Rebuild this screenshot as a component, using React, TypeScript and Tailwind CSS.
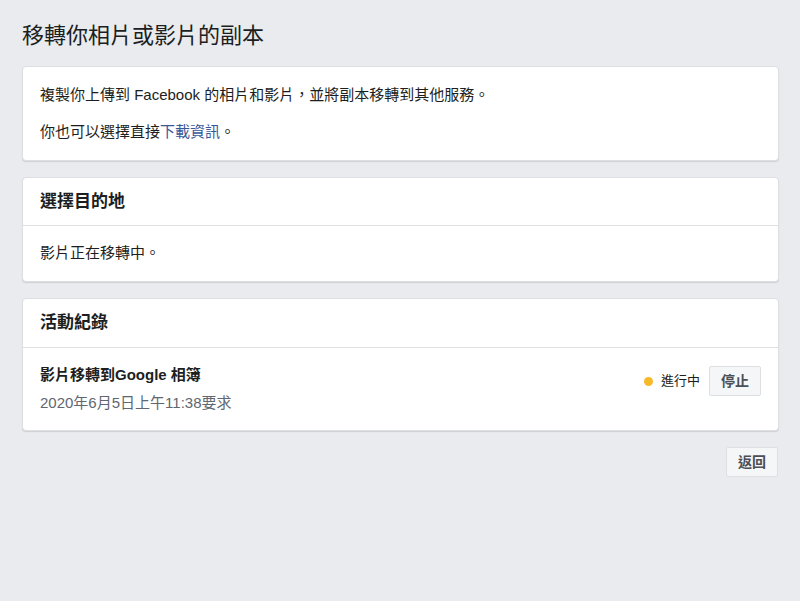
import React from "react";

const font = { fontFamily: '"Liberation Sans", "Noto Sans CJK TC", sans-serif' };

function Card({ children }: { children: React.ReactNode }) {
  return (
    <div className="bg-white rounded-[4px] border border-[#dddfe2] shadow-[0_1px_1px_rgba(0,0,0,0.12)]">
      {children}
    </div>
  );
}

export default function App() {
  return (
    <div className="min-h-[601px] w-full bg-[#e9ebee] text-[#1c1e21]" style={font}>
      <div className="pl-[22px] pr-[21px] pt-[22px]">
        <h1 className="text-[22px] leading-[28px] font-normal">移轉你相片或影片的副本</h1>

        <div className="mt-[16px] flex flex-col gap-[16px]">
          <Card>
            <div className="px-[17px] pt-[19px] pb-[19px] text-[15px] leading-[18px]">
              <p>複製你上傳到 Facebook 的相片和影片，並將副本移轉到其他服務。</p>
              <p className="mt-[19px]">
                你也可以選擇直接<span className="text-[#385898]">下載資訊</span>。
              </p>
            </div>
          </Card>

          <Card>
            <div className="h-[48px] flex items-center px-[17px] text-[17px] font-bold border-b border-[#dddfe2]">
              選擇目的地
            </div>
            <div className="h-[55px] flex items-center px-[17px] text-[15px]">影片正在移轉中。</div>
          </Card>

          <Card>
            <div className="h-[49px] flex items-center px-[17px] text-[17px] font-bold border-b border-[#dddfe2]">
              活動紀錄
            </div>
            <div className="flex items-start justify-between px-[17px] pt-[18px] pb-[18px]">
              <div>
                <div className="text-[15px] leading-[18px] font-bold">影片移轉到Google 相簿</div>
                <div className="mt-[10px] text-[15px] leading-[18px] text-[#606770]">2020年6月5日上午11:38要求</div>
              </div>
              <div className="flex items-center">
                <span className="w-[9px] h-[9px] rounded-full bg-[#f7b928] mr-[8px]" />
                <span className="text-[13px] mr-[9px]">進行中</span>
                <button className="h-[30px] px-[11px] text-[14px] font-bold text-[#4b4f56] bg-[#f5f6f7] border border-[#dddfe2] rounded-[2px]">
                  停止
                </button>
              </div>
            </div>
          </Card>
        </div>

        <div className="mt-[16px] flex justify-end pr-[1px]">
          <button className="h-[30px] px-[11px] text-[14px] font-bold text-[#4b4f56] bg-[#f5f6f7] border border-[#dddfe2] rounded-[2px]">
            返回
          </button>
        </div>
      </div>
    </div>
  );
}
